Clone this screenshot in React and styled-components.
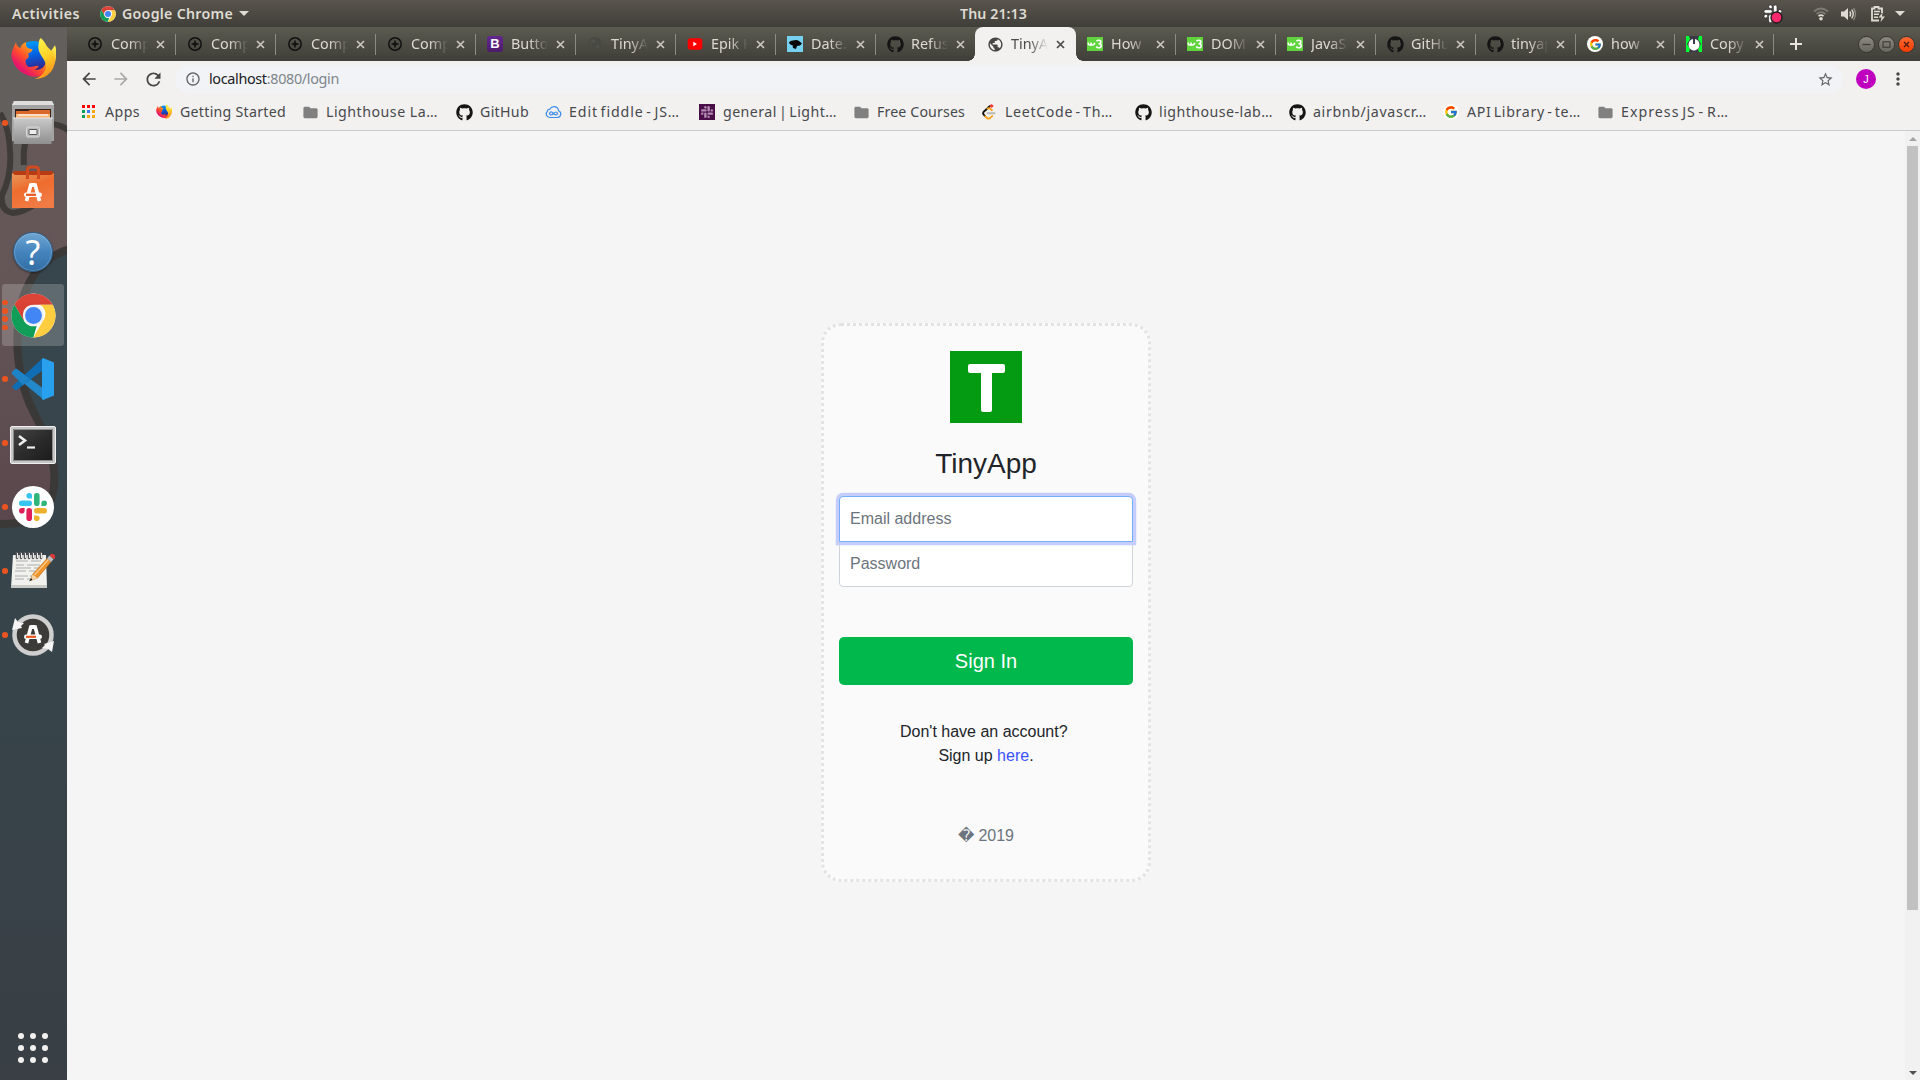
import React, { useLayoutEffect, useRef, useState } from "react";
import styled, { createGlobalStyle, css } from "styled-components";
import { FaGithub } from "react-icons/fa";
import { FcGoogle } from "react-icons/fc";
import {
  MdArrowBack,
  MdArrowForward,
  MdFolder,
  MdInfoOutline,
  MdMoreVert,
  MdPublic,
  MdRefresh,
  MdStarBorder,
} from "react-icons/md";

const UI_FONT = '"Noto Sans", "Open Sans", sans-serif';

const GlobalStyle = createGlobalStyle`
  *, *::before, *::after { box-sizing: border-box; }
  html, body { margin: 0; overflow: hidden; }
  svg { display: block; flex: none; }
`;

/* ---------- text fitted to a column ---------- */

const FitText = styled.span`
  display: inline-block;
  white-space: pre;
`;

function Fit({ width, children }) {
  const ref = useRef(null);
  const [spacing, setSpacing] = useState(0);
  useLayoutEffect(() => {
    const natural = ref.current.getBoundingClientRect().width;
    const count = ref.current.textContent.length;
    setSpacing((width - natural) / count);
  }, [width]);
  return (
    <FitText ref={ref} style={{ letterSpacing: spacing }}>
      {children}
    </FitText>
  );
}

/* ---------- frame ---------- */

const Desktop = styled.div`
  display: flex;
  flex-direction: column;
  width: 1920px;
  height: 1080px;
  overflow: hidden;
  font-family: ${UI_FONT};
  background: #37444a;
`;

const TopBar = styled.header`
  display: grid;
  grid-template-columns: 960px 1fr auto;
  align-items: center;
  height: 27px;
  flex: none;
  background: linear-gradient(#59554d, #403e39);
  color: #dfdbd2;
  font-size: 14.2px;
  font-weight: 600;
  line-height: 27px;
`;

const TopLeft = styled.div`
  display: flex;
  align-items: center;
  padding-left: 12px;
`;

const AppMenu = styled.div`
  display: flex;
  align-items: center;
  gap: 6px;
  margin-left: 20px;
`;

const Caret = styled.i`
  width: 0;
  height: 0;
  border: 5px solid transparent;
  border-top-color: #dfdbd2;
  border-bottom: 0;
`;

const Tray = styled.div`
  display: flex;
  align-items: center;
  padding-right: 15px;
`;

const TrayIcon = styled.span`
  display: flex;
  margin-right: ${(p) => p.$after}px;
`;

const Body = styled.div`
  display: flex;
  flex: 1;
  min-height: 0;
`;

/* ---------- dock ---------- */

const DockBar = styled.nav`
  position: relative;
  display: flex;
  flex-direction: column;
  width: 67px;
  flex: none;
  overflow: hidden;
`;

const Wallpaper = styled.svg`
  position: absolute;
  inset: 0;
`;

const DockItem = styled.div`
  position: relative;
  display: flex;
  align-items: center;
  justify-content: center;
  height: 64px;
  padding-right: 1px;
  flex: none;
`;

const DockTile = styled.div`
  display: flex;
  align-items: center;
  justify-content: center;
  width: 62px;
  height: 62px;
  padding-top: ${(p) => Math.max(0, p.$drop || 0) * 2}px;
  padding-bottom: ${(p) => Math.max(0, -(p.$drop || 0)) * 2}px;
  border-radius: 3px;
  background: ${(p) => (p.$active ? "rgba(255,255,255,0.2)" : "transparent")};
`;

const Dots = styled.div`
  position: absolute;
  left: 2px;
  top: 0;
  height: 64px;
  display: flex;
  flex-direction: column;
  justify-content: center;
  gap: 2.8px;
`;

const Dot = styled.i`
  width: 5.6px;
  height: 5.6px;
  border-radius: 50%;
  background: #e95420;
`;

const AppGrid = styled.div`
  position: relative;
  display: grid;
  grid-template-columns: repeat(3, 6px);
  gap: 6px;
  margin: auto 0 17px 18px;
`;

const GridDot = styled.i`
  height: 6px;
  border-radius: 50%;
  background: #f2f1f0;
`;

/* ---------- browser ---------- */

const Browser = styled.div`
  display: flex;
  flex-direction: column;
  flex: 1;
  min-width: 0;
  background: #f2f1f0;
`;

const TabStrip = styled.div`
  display: flex;
  height: 34px;
  flex: none;
  padding-left: 8px;
  background: linear-gradient(#5b5b51, #3f3e38);
`;

const activeTab = css`
  margin-right: -1px;
  background: #f2f1f0;
  border-radius: 8px 8px 0 0;
  color: #4b4b4b;
  z-index: 1;
  &::before,
  &::after {
    content: "";
    position: absolute;
    bottom: 0;
    width: 7px;
    height: 7px;
  }
  &::before {
    left: -7px;
    background: radial-gradient(circle at 0 0, transparent 6.5px, #f2f1f0 7px);
  }
  &::after {
    right: -7px;
    background: radial-gradient(circle at 100% 0, transparent 6.5px, #f2f1f0 7px);
  }
`;

const TabBox = styled.div`
  position: relative;
  display: flex;
  align-items: center;
  width: ${(p) => p.$width}px;
  flex: none;
  padding-left: 12px;
  color: #dcd9cf;
  ${(p) => p.$active && activeTab}
`;

const TabTitle = styled.span`
  width: 37px;
  margin: 0 7.5px 0 8px;
  overflow: hidden;
  white-space: pre;
  font-size: 14.4px;
  line-height: 20px;
  mask-image: linear-gradient(90deg, #000 50%, transparent 100%);
`;

const Divider = styled.i`
  width: 1px;
  height: 21px;
  margin: 0 -1px 0 auto;
  background: ${(p) => (p.$hidden ? "transparent" : "#8b8a83")};
`;

const NewTab = styled.button`
  display: flex;
  align-items: center;
  justify-content: center;
  width: 46px;
  border: 0;
  padding: 0;
  background: none;
`;

const WindowButtons = styled.div`
  display: flex;
  align-items: center;
  gap: 3px;
  margin-left: auto;
  padding-right: 5px;
`;

const WindowButton = styled.span`
  display: flex;
  align-items: center;
  justify-content: center;
  width: 17px;
  height: 17px;
  border: 1px solid #373630;
  border-radius: 50%;
  background: ${(p) =>
    p.$close ? "linear-gradient(#fb6a35, #f23c00)" : "linear-gradient(#8b8980, #686760)"};
`;

const Toolbar = styled.div`
  display: flex;
  align-items: center;
  height: 36px;
  flex: none;
  padding: 0 0 0 12px;
`;

const NavIcon = styled.span`
  display: flex;
  justify-content: center;
  width: 20px;
  flex: none;
  margin-right: 12px;
  color: ${(p) => (p.$dim ? "#aaa9a8" : "#464646")};
`;

const Omnibox = styled.div`
  display: flex;
  align-items: center;
  width: 1668px;
  flex: none;
  height: 28px;
  padding: 0 9px 0 10px;
  border-radius: 14px;
  background: #f1f3f6;
  color: #5f6368;
`;

const Url = styled.span`
  flex: 1;
  margin-left: 8px;
  font-size: 14.4px;
  line-height: 20px;
  color: #80868b;
`;

const Host = styled.span`
  color: #202124;
`;

const Avatar = styled.span`
  display: flex;
  align-items: center;
  justify-content: center;
  width: 20px;
  height: 20px;
  flex: none;
  margin: 0 12px 0 13px;
  border-radius: 50%;
  background: #bf00be;
  color: #fff;
  font: 11px "Liberation Sans", sans-serif;
`;

const MenuIcon = styled.span`
  display: flex;
  width: 20px;
  color: #464646;
`;

const Bookmarks = styled.div`
  display: flex;
  align-items: center;
  height: 34px;
  flex: none;
  padding: 0 0 3px 14px;
  border-bottom: 1px solid #cbcbcb;
`;

const Bookmark = styled.div`
  display: flex;
  align-items: center;
  gap: 8px;
  width: ${(p) => p.$width}px;
  flex: none;
  color: #47494c;
  font-size: 14.2px;
  line-height: 20px;
  word-spacing: ${(p) => (p.$tight ? -2 : 0)}px;
`;

const IconSlot = styled.span`
  display: flex;
  align-items: center;
  justify-content: center;
  width: 16px;
  height: 16px;
  flex: none;
`;

const Folder = styled(MdFolder)`
  color: #808080;
`;

const WhiteDisc = styled.span`
  display: flex;
  align-items: center;
  justify-content: center;
  width: 16px;
  height: 16px;
  border-radius: 50%;
  background: #fff;
`;

/* ---------- page ---------- */

const Viewport = styled.div`
  display: flex;
  flex: 1;
  min-height: 0;
`;

const Page = styled.main`
  display: flex;
  flex: 1;
  align-items: flex-start;
  justify-content: center;
  padding-top: 192px;
  background: #f5f5f5;
  font-family: "Liberation Sans", Arial, sans-serif;
  font-size: 16px;
  line-height: 24px;
  color: #212529;
`;

const Card = styled.form`
  display: flex;
  flex-direction: column;
  align-items: center;
  width: 330px;
  height: 559px;
  padding: 25px 15px 0;
  border: 3px dotted #e3e3e3;
  border-radius: 20px;
  background: #fafafa;
`;

const Title = styled.h1`
  margin: 24px 0 15px;
  font-size: 28px;
  font-weight: 400;
  line-height: 34px;
`;

const Field = styled.input`
  width: 294px;
  height: 46px;
  flex: none;
  padding: 0 10px;
  border: 1px solid #ced4da;
  border-radius: 0 0 4px 4px;
  outline: 0;
  background: #fff;
  font: inherit;
  &::placeholder {
    color: #6c757d;
    opacity: 1;
  }
  ${(p) =>
    p.$focused &&
    css`
      position: relative;
      margin-bottom: -1px;
      border-color: #75aefb;
      border-radius: 4px 4px 0 0;
      box-shadow: 0 0 0 3.2px #c5cdfc;
    `}
`;

const Submit = styled.button`
  width: 294px;
  height: 48px;
  flex: none;
  margin: 50px 0 35px;
  border: 0;
  border-radius: 5px;
  background: #00b84c;
  color: #fff;
  font: inherit;
  font-size: 20px;
`;

const Hint = styled.p`
  margin: 0;
  text-align: center;
  white-space: pre;
`;

const Link = styled.a`
  color: #3b52fb;
  text-decoration: none;
`;

const Copyright = styled.p`
  display: flex;
  gap: 4px;
  margin: 56px 0 0;
  color: #6c757d;
`;

const Replacement = styled.span`
  font-family: "DejaVu Sans", sans-serif;
`;

const Scrollbar = styled.div`
  display: flex;
  flex-direction: column;
  align-items: center;
  justify-content: space-between;
  width: 15px;
  padding: 6px 0 5px;
  background: #f1f1f1;
`;

const Thumb = styled.i`
  width: 11px;
  height: 764px;
  margin: 5px 0 auto;
  background: #c1c1c1;
`;

const Arrow = styled.i`
  width: 0;
  height: 0;
  border: 4px solid transparent;
  ${(p) =>
    p.$up
      ? "border-top: 0; border-bottom-color: #a3a3a3;"
      : "border-bottom: 0; border-top-color: #505050;"}
`;

/* ---------- drawings ---------- */

const ChromeLogo = ({ size }) => (
  <svg width={size} height={size} viewBox="0 0 48 48">
    <circle cx="24" cy="24" r="23.5" fill="#fff" />
    <path d="M3.6 12.3A23.5 23.5 0 0 1 44.4 12.5H24a11.6 11.6 0 0 0-10.4 6.4L13.9 30Z" fill="#db4437" />
    <path d="M3.6 12.3 14 30a11.6 11.6 0 0 0 13.5 5L23.8 47.5A23.5 23.5 0 0 1 3.6 12.3Z" fill="#0f9d58" />
    <path d="M44.4 12.5A23.5 23.5 0 0 1 23.8 47.5L34 29.8A11.6 11.6 0 0 0 31 12.5Z" fill="#ffcd40" />
    <path d="M3.6 12.3 14 30l3-12 7-5.5h20.4l-3.4-4.3Z" fill="#c53929" opacity=".12" />
    <circle cx="24" cy="24" r="11.3" fill="#f1f1f1" />
    <circle cx="24" cy="24" r="9" fill="#4285f4" />
  </svg>
);

const FirefoxLogo = ({ size, id }) => (
  <svg width={size} height={size} viewBox="0 0 44 44">
    <defs>
      <linearGradient id={id + "b"} x1="0.9" y1="0.1" x2="0.1" y2="0.8">
        <stop offset="0" stopColor="#fff04a" />
        <stop offset=".35" stopColor="#ffa51b" />
        <stop offset=".65" stopColor="#ff4b2e" />
        <stop offset=".9" stopColor="#e5156b" />
      </linearGradient>
      <linearGradient id={id + "g"} x1="0" y1="0" x2="0.2" y2="1">
        <stop offset="0" stopColor="#00a8f8" />
        <stop offset=".5" stopColor="#0460e0" />
        <stop offset="1" stopColor="#3b1d80" />
      </linearGradient>
      <linearGradient id={id + "y"} x1="0.2" y1="0" x2="0.5" y2="1">
        <stop offset="0" stopColor="#fff44f" />
        <stop offset=".5" stopColor="#ffd42a" />
        <stop offset="1" stopColor="#ff8e1a" />
      </linearGradient>
    </defs>
    <circle cx="22" cy="20" r="16" fill={`url(#${id}g)`} />
    <path
      d="M5 5c0 3 1 4 4 6 1-3 3-5 6-6-1 3 0 5 2 6l4 1c0 2-2 3-4 4 0 3 1 4-1 5-3 1-2 6 1 8 3 1 6-1 9-1 2 0 0 3-3 4 6 1 12-3 11-11l9-13c3 8 1 18-4 24-6 7-17 9-26 4C2 30-2 18 2 12 3 9 4 7 5 5Z"
      fill={`url(#${id}b)`}
    />
    <path d="M29 1c5 4 5 8 9 11 7 7 6 18-1 24-4 4-9 5-14 5 8-3 12-8 11-14-1-7-9-11-7-20 0-3 1-5 2-6Z" fill={`url(#${id}y)`} />
  </svg>
);

const FilesLogo = () => (
  <svg width="42" height="44" viewBox="0 0 42 44">
    <defs>
      <linearGradient id="cab" x1="0" y1="0" x2="0" y2="1">
        <stop offset="0" stopColor="#c9c9c9" />
        <stop offset="1" stopColor="#8f8f8f" />
      </linearGradient>
    </defs>
    <path d="M2 1h38l2 4v36H0V5Z" fill="#a3a3a3" />
    <path d="M2 1h38l2 4H0Z" fill="#dedede" />
    <path d="M3 9h36v13H3Z" fill="#33231c" />
    <path d="M4 11h12l2-1h20v8H4Z" fill="#d9692a" />
    <path d="M4 14h34v6H4Z" fill="#f6b676" />
    <path d="M6 15h30" stroke="#fff" strokeWidth="1.2" />
    <path d="M1.500 18h38.500l-.5 26H2Z" fill="url(#cab)" />
    <path d="M1 18h40" stroke="#e8e8e8" />
    <rect x="14.500" y="27" width="13" height="10" rx="1.500" fill="#b9b9b9" stroke="#dadada" />
    <rect x="17" y="29.500" width="8" height="5" rx=".5" fill="#eee" stroke="#555" />
  </svg>
);

const LetterA = ({ color = "#fff" }) => (
  <g>
    <path d="M2.500 18 6.800 2h4.400L15.500 18" stroke={color} strokeWidth="3.600" fill="none" />
    <path d="M7 0h4v4H7Z" fill={color} />
    <rect x="0" y="9.500" width="18" height="4.500" rx="2.200" fill={color} />
    <path d="M2 11.800h10" stroke="#e95420" strokeWidth="2.200" />
  </g>
);

const SoftwareLogo = () => (
  <svg width="42" height="44" viewBox="0 0 42 44">
    <defs>
      <linearGradient id="bag" x1="0" y1="0" x2="0.4" y2="1">
        <stop offset="0" stopColor="#e8995e" />
        <stop offset=".5" stopColor="#ee6c2d" />
        <stop offset="1" stopColor="#f17b45" />
      </linearGradient>
    </defs>
    <path d="M2 6h38l2 3v5H0V9Z" fill="#b83c13" />
    <path d="M0 8 3 10h36l3-2v35H0Z" fill="url(#bag)" />
    <path d="M15.500 14V5q0-3 3-3h5q3 0 3 3v9" stroke="#cf4a1f" strokeWidth="3" fill="none" />
    <g transform="translate(12,18)">
      <LetterA />
    </g>
  </svg>
);

const HelpMark = styled.span`
  display: flex;
  align-items: center;
  justify-content: center;
  width: 40px;
  height: 40px;
  border: 1px solid #2d618f;
  border-radius: 50%;
  background: linear-gradient(#6fa5d3, #4484bd 50%, #326ea4);
  box-shadow: 0 1px 2px rgba(0, 0, 0, 0.4), inset 0 0 0 1px rgba(255, 255, 255, 0.2);
  color: #fff;
  font: 34px/40px "Noto Sans", sans-serif;
`;

const CodeLogo = () => (
  <svg width="42" height="42" viewBox="0 0 42 42">
    <path d="M0 14 4 10.500 32 31v11L0 15.500Z" fill="#2489ca" />
    <path d="M0 28.500 31 0v12L4 32.500 0 29Z" fill="#0f6db3" />
    <path d="M31 0 42 4.500v33L31 42l-1-1V1Z" fill="#29a0ee" />
    <path d="M0 14 4 10.500 18 21l-7 6-11-11Z" fill="#1d82c6" />
  </svg>
);

const TerminalLogo = () => (
  <svg width="46" height="38" viewBox="0 0 46 38">
    <defs>
      <linearGradient id="term" x1="0" y1="0" x2="1" y2="1">
        <stop offset="0" stopColor="#444" />
        <stop offset=".5" stopColor="#2c2c2c" />
        <stop offset="1" stopColor="#1b1b1b" />
      </linearGradient>
    </defs>
    <rect x=".5" y=".5" width="45" height="37" rx="1.500" fill="#c6c6c6" stroke="#efefef" />
    <rect x="3.500" y="3.500" width="39" height="31" fill="url(#term)" stroke="#8b8b8b" />
    <path d="m9 10 6 4.500-6 4.500" stroke="#eee" strokeWidth="2.600" fill="none" />
    <path d="M17 21.500h8" stroke="#eee" strokeWidth="2.200" />
  </svg>
);

const SlackShape = ({ colors }) => (
  <g>
    <g fill={colors[0]}>
      <rect x="0" y="7.400" width="13" height="5.600" rx="2.800" />
      <path d="M13 5.600h-2.800A2.800 2.800 0 1 1 13 2.800Z" />
    </g>
    <g fill={colors[1]}>
      <rect x="15" y="0" width="5.600" height="13" rx="2.800" />
      <path d="M22.400 13v-2.800a2.800 2.800 0 1 1 2.800 2.800Z" />
    </g>
    <g fill={colors[2]}>
      <rect x="15" y="15" width="13" height="5.600" rx="2.800" />
      <path d="M15 22.400h2.800a2.800 2.800 0 1 1-2.800 2.800Z" />
    </g>
    <g fill={colors[3]}>
      <rect x="7.400" y="15" width="5.600" height="13" rx="2.800" />
      <path d="M5.600 15v2.800A2.800 2.800 0 1 1 2.800 15Z" />
    </g>
  </g>
);

const SlackLogo = () => (
  <svg width="42" height="42" viewBox="0 0 42 42">
    <circle cx="21" cy="21" r="21" fill="#fff" />
    <g transform="translate(7,7)">
      <SlackShape colors={["#36c5f0", "#2eb67d", "#ecb22e", "#e01e5a"]} />
    </g>
  </svg>
);

const NotesLogo = () => (
  <svg width="46" height="38" viewBox="0 0 46 38">
    <path d="M3 4h33l1 33H1Z" fill="#f1f1ee" />
    <path d="M1 34h36v3H1Z" fill="#c9c9c5" />
    <path
      d="M6 10h12m3 0h10M6 14h8m3 0h13M6 17h15m3 0h5M5 20h11m3 0h6M5 25h13m2 0h3M5 28h9m3 0h4"
      stroke="#a5a5a2"
      strokeWidth=".9"
    />
    <path d="M7 2v5M11 2v5M15 2v5M19 2v5M23 2v5M27 2v5M31 2v5" stroke="#5b5b5b" strokeWidth="2.600" strokeLinecap="round" />
    <path d="M7.500 2v5M11.500 2v5M15.500 2v5M19.500 2v5M23.500 2v5M27.500 2v5M31.500 2v5" stroke="#e9e9e9" strokeWidth="1" />
    <path d="m22.500 23.500 14.500-16 4 3.500-13.500 16-7 2.500Z" fill="#f0932b" stroke="#b5651a" strokeWidth=".6" />
    <path d="m24.500 24 14-15.500" stroke="#ffc985" strokeWidth="1.300" />
    <path d="m22.500 23.500 5 3.500-7 3Z" fill="#f5d6a5" />
    <path d="m21 27 1.600 1.800L19 30.500Z" fill="#222" />
    <path d="m37 7.500 2.500-3 4 3.700-2.500 3Z" fill="#bdbdbd" />
    <path d="m39.500 4.500q2-3 4.500-1t0 4.700Z" fill="#dc3a3a" />
  </svg>
);

const UpdaterLogo = () => (
  <svg width="44" height="44" viewBox="0 0 44 44">
    <circle cx="22" cy="22" r="18.500" fill="#3d3b38" stroke="#cfcfcf" strokeWidth="4.500" />
    <path d="M1 17 4 5l3 4 6 1-3 3 1 2Z" fill="#f4f4f4" />
    <path d="m43 28-2 11-4-3-6-1 3-3-1-1Z" fill="#f4f4f4" />
    <g transform="translate(13,12)">
      <LetterA />
    </g>
  </svg>
);

const DockWallpaper = () => (
  <Wallpaper width="67" height="1053" viewBox="0 27 67 1053">
    <defs>
      <linearGradient id="sky" x1="0" y1="0" x2="0" y2="1">
        <stop offset="0" stopColor="#37464e" />
        <stop offset=".65" stopColor="#37444a" />
        <stop offset="1" stopColor="#393f44" />
      </linearGradient>
      <linearGradient id="rock" x1="0" y1="0" x2="0" y2="1">
        <stop offset="0" stopColor="#675a59" />
        <stop offset=".5" stopColor="#645657" />
        <stop offset="1" stopColor="#5a474d" />
      </linearGradient>
    </defs>
    <rect y="27" width="67" height="1053" fill="url(#sky)" />
    <path d="M0 27H67V249C40 256 28 277 20 300C10 345 17 385 33 415C54 450 54 490 47 507C38 524 20 525 0 525Z" fill="url(#rock)" />
    <path d="M0 27H67V128Q57 123 45 125Q24 130 25 165Q26 205 13 212Q2 211 1 199Q13 175 11 150Q9 127 0 113Z" fill="#625f5d" />
    <path d="M0 113Q9 127 10 150Q12 175 2 195Q0 211 13 213Q27 212 46 196" stroke="#3e3b38" strokeWidth="6" fill="none" />
    <path d="M24 165Q21 128 45 125Q58 122 69 131" stroke="#3e3b38" strokeWidth="6" fill="none" />
    <path d="M70 249C42 257 30 277 22 300C12 345 19 385 35 415C58 455 57 485 50 503C41 522 20 524 0 524" stroke="#3b3937" strokeWidth="8" fill="none" />
  </Wallpaper>
);

const PlusTarget = () => (
  <svg width="16" height="16" viewBox="0 0 16 16" stroke="#111" fill="none">
    <circle cx="8" cy="8" r="6.200" strokeWidth="1.500" />
    <path d="M8 4.500v7M4.500 8h7" strokeWidth="1.500" />
    <circle cx="8" cy="8" r="1.800" fill="#111" stroke="none" />
  </svg>
);

const BootstrapTile = styled.span`
  display: flex;
  align-items: center;
  justify-content: center;
  width: 16px;
  height: 16px;
  border-radius: 3px;
  background: linear-gradient(#64278f, #4c1b6c);
  color: #fff;
  font: bold 13px/16px "Liberation Sans", sans-serif;
`;

const FaintGlobe = () => (
  <svg width="16" height="16" viewBox="0 0 16 16">
    <circle cx="8" cy="8" r="7" fill="#494943" />
    <path d="M5 4q3-2 4 0t-3 3-2 3-1-4Zm5 5q3-1 2 2t-3 1Z" fill="#51514a" />
  </svg>
);

const PlayTile = () => (
  <svg width="16" height="16" viewBox="0 0 16 16">
    <rect x=".7" y="2.300" width="14.600" height="11.400" rx="2.600" fill="#f00" />
    <path d="M6.300 5.800v4.400L10 8Z" fill="#fff" />
  </svg>
);

const DinoTile = () => (
  <svg width="16" height="16" viewBox="0 0 16 16">
    <path d="M0 0h16v16H0Z" fill="#76d0f0" />
    <path d="M2 7q0-2 4-2.500 4-1 6 .5l3 2.500-2 2-3 .5-1 3-3-1-.5-3L4 9Z" fill="#080808" />
  </svg>
);

const SchoolsTile = () => (
  <svg width="16" height="16" viewBox="0 0 16 16">
    <path d="M0 1h16v14H0Z" fill="#5fd43c" />
    <path d="M1.200 6.500v.8q0 1.700 1.400 1.700t1.400-1.700v-.8.8Q4 9 5.500 9q1.200 0 2.500-2M9.500 5.300q.8-1 2.300-1 2 0 2 1.600T11.500 7.800q2.800 0 2.800 2t-2.500 2q-1.800 0-2.600-1.300" stroke="#fff" strokeWidth="1.600" fill="none" />
  </svg>
);

const CopyTile = () => (
  <svg width="16" height="16" viewBox="0 0 16 16">
    <path d="M0 0h16v16H0Z" fill="#0f3" />
    <path d="M3 0h10l-1 3 3 5-3 5 1 3H3l1-3-3-5 3-5Z" fill="#3c3747" />
    <path d="M7 3Q2.500 4 2.500 9 3 13 6 14q2 1 4 0 3-1 3.500-5 0-5-4.500-6v5H7Z" fill="#fff" />
  </svg>
);

const AppsIcon = () => (
  <svg width="16" height="16" viewBox="0 0 16 16">
    {["#f00", "#f00", "#f00", "#0a9d58", "#3b7df0", "#fba60a", "#0a9d58", "#fba60a", "#fba60a"].map((c, i) => (
      <rect key={i} x={1 + (i % 3) * 5} y={1 + Math.floor(i / 3) * 5} width="3" height="3" fill={c} />
    ))}
  </svg>
);

const FiddleIcon = () => (
  <svg width="17" height="16" viewBox="0 0 17 16" fill="none" stroke="#3b8de8" strokeWidth="1.200">
    <path d="M4.500 13.500a3.600 3.600 0 0 1-2-6.300Q2.500 5 4.700 5.300 6.500 2.500 9.500 2.700q3.700.5 4 4 2.500 1 2.300 3.500-.4 3-3.300 3.300Z" />
    <path d="M8.500 9.500q-3-3.400-4 0 1 3 4 0t4 0q-1 3-4 0Z" />
  </svg>
);

const SlackTile = () => (
  <svg width="16" height="16" viewBox="0 0 16 16">
    <path d="M0 0h16v16H0Z" fill="#4a0f49" />
    <g transform="translate(2,2) scale(.43)">
      <SlackShape colors={["#b48bb2", "#b48bb2", "#b48bb2", "#b48bb2"]} />
    </g>
  </svg>
);

const LeetIcon = () => (
  <svg width="16" height="16" viewBox="0 0 16 16" fill="none" strokeWidth="1.900" strokeLinecap="round">
    <path d="M6.500 9.300h7" stroke="#b8b8b8" />
    <path d="m9 2-6.500 6q-1 1.200 0 2.300l1.800 2" stroke="#111" />
    <path d="m4.300 12.300 1.700 1.800q1.500 1 3 0l2.200-2M6.500 4.500q1.800-.8 3 .4l1.400 1.300" stroke="#fba41d" />
    <circle cx="10.500" cy="2" r="1.300" fill="#ef3b3b" stroke="#ef3b3b" strokeWidth="1" />
  </svg>
);

const Close = ({ color }) => (
  <svg width="9" height="9" viewBox="0 0 9 9">
    <path d="m1 1 7 7M8 1 1 8" stroke={color} strokeWidth="1.700" />
  </svg>
);

const SlackTray = () => (
  <svg width="20" height="20" viewBox="0 0 20 20">
    <g transform="translate(1,1) scale(.63)" stroke="#111" strokeWidth=".8">
      <SlackShape colors={["#fff", "#fff", "#fff", "#fff"]} />
    </g>
    <circle cx="13.500" cy="13.500" r="5.500" fill="#f9286f" stroke="#1b1b1b" strokeWidth="1.300" />
  </svg>
);

const WifiIcon = () => (
  <svg width="16" height="14" viewBox="0 0 16 14" fill="none" strokeWidth="1.700">
    <path d="M1 4.500q7-6 14 0" stroke="#7d7a73" />
    <path d="M3.500 7q4.500-3.800 9 0" stroke="#7d7a73" />
    <path d="M5.500 9.200q2.500-2 5 0" stroke="#dfdbd2" />
    <circle cx="8" cy="11.800" r="1.800" fill="#dfdbd2" />
  </svg>
);

const VolumeIcon = () => (
  <svg width="16" height="14" viewBox="0 0 16 14" fill="none">
    <path d="M0 4.500h3L7 1v12L3 9.500H0Z" fill="#dfdbd2" />
    <path d="M8.800 4.500q1.700 2.500 0 5M10.700 2.700q3 4.300 0 8.600" stroke="#dfdbd2" strokeWidth="1.400" />
    <path d="M12.500 1q4 6 0 12" stroke="#8a877f" strokeWidth="1.400" />
  </svg>
);

const BatteryIcon = () => (
  <svg width="14" height="16" viewBox="0 0 14 16" fill="none">
    <path d="M8 14.500H1V2.500h2.500V1h4v1.500H11V7" stroke="#dfdbd2" strokeWidth="1.800" />
    <path d="M3 5.500h6M3 8.300h5M3 11.200h4" stroke="#dfdbd2" strokeWidth="1.500" />
    <path d="M11.500 6.500 7.500 11.500h3l-1 4.500 4.500-5.500h-3Z" fill="#dfdbd2" />
  </svg>
);

const LogoTile = () => (
  <svg width="72" height="72" viewBox="0 0 72 72">
    <path d="M0 0h72v72H0Z" fill="#049b12" />
    <rect x="18" y="13" width="37" height="9" rx="2" fill="#fff" />
    <rect x="31" y="15" width="11" height="46" rx="2" fill="#fff" />
    <path d="M49 69h21" stroke="#2d850c" strokeWidth="1" strokeDasharray="2 1" />
  </svg>
);

/* ---------- data ---------- */

const github = <FaGithub size={17} color="#151515" />;

const tabs = [
  { icon: <PlusTarget />, title: "Comp" },
  { icon: <PlusTarget />, title: "Comp" },
  { icon: <PlusTarget />, title: "Comp" },
  { icon: <PlusTarget />, title: "Comp" },
  { icon: <BootstrapTile>B</BootstrapTile>, title: "Butto" },
  { icon: <FaintGlobe />, title: "TinyA" },
  { icon: <PlayTile />, title: "Epik H" },
  { icon: <DinoTile />, title: "Date." },
  { icon: github, title: "Refus", bare: true },
  { icon: <MdPublic size={17} color="#464646" />, title: "TinyA", active: true, bare: true, width: 101 },
  { icon: <SchoolsTile />, title: "How" },
  { icon: <SchoolsTile />, title: "DOM" },
  { icon: <SchoolsTile />, title: "JavaS" },
  { icon: github, title: "GitHu" },
  { icon: github, title: "tinyap" },
  { icon: <WhiteDisc><FcGoogle size={13} /></WhiteDisc>, title: "how", width: 99 },
  { icon: <CopyTile />, title: "Copy", width: 99 },
];

const bookmarks = [
  { icon: <AppsIcon />, label: "Apps", text: 35, width: 75 },
  { icon: <FirefoxLogo size={16} id="fs" />, label: "Getting Started", text: 106, width: 146 },
  { icon: <Folder size={17} />, label: "Lighthouse La…", text: 112, width: 154 },
  { icon: github, label: "GitHub", text: 49, width: 89 },
  { icon: <FiddleIcon />, label: "Edit fiddle - JS…", text: 111, width: 154, tight: true },
  { icon: <SlackTile />, label: "general | Light…", text: 114, width: 154, tight: true },
  { icon: <Folder size={17} />, label: "Free Courses", text: 88, width: 128 },
  { icon: <LeetIcon />, label: "LeetCode - Th…", text: 108, width: 154, tight: true },
  { icon: github, label: "lighthouse-lab…", text: 114, width: 154 },
  { icon: github, label: "airbnb/javascr…", text: 114, width: 154 },
  { icon: <WhiteDisc><FcGoogle size={14} /></WhiteDisc>, label: "API Library - te…", text: 114, width: 154, tight: true },
  { icon: <Folder size={17} />, label: "Express JS - R…", text: 108, width: 154, tight: true },
];

const dock = [
  { icon: <FirefoxLogo size={45} id="fl" />, dots: 0 },
  { icon: <FilesLogo />, dots: 1, drop: -1 },
  { icon: <SoftwareLogo />, dots: 0 },
  { icon: <HelpMark>?</HelpMark>, dots: 0, drop: 1 },
  { icon: <ChromeLogo size={45} />, dots: 4, active: true },
  { icon: <CodeLogo />, dots: 1 },
  { icon: <TerminalLogo />, dots: 1, drop: 2 },
  { icon: <SlackLogo />, dots: 1 },
  { icon: <NotesLogo />, dots: 1, drop: -1 },
  { icon: <UpdaterLogo />, dots: 1 },
];

export default function App() {
  return (
    <Desktop>
      <GlobalStyle />
      <TopBar>
        <TopLeft>
          <Fit width={68}>Activities</Fit>
          <AppMenu>
            <ChromeLogo size={16} />
            <Fit width={111}>Google Chrome</Fit>
            <Caret />
          </AppMenu>
        </TopLeft>
        <div>
          <Fit width={67}>Thu 21:13</Fit>
        </div>
        <Tray>
          <TrayIcon $after={30}><SlackTray /></TrayIcon>
          <TrayIcon $after={12}><WifiIcon /></TrayIcon>
          <TrayIcon $after={14}><VolumeIcon /></TrayIcon>
          <TrayIcon $after={10}><BatteryIcon /></TrayIcon>
          <Caret />
        </Tray>
      </TopBar>

      <Body>
        <DockBar>
          <DockWallpaper />
          {dock.map((item, i) => (
            <DockItem key={i}>
              <DockTile $active={item.active} $drop={item.drop}>{item.icon}</DockTile>
              <Dots>
                {Array.from({ length: item.dots }, (_, d) => (
                  <Dot key={d} />
                ))}
              </Dots>
            </DockItem>
          ))}
          <AppGrid>
            {Array.from({ length: 9 }, (_, i) => (
              <GridDot key={i} />
            ))}
          </AppGrid>
        </DockBar>

        <Browser>
          <TabStrip>
            {tabs.map((tab, i) => (
              <TabBox key={i} $width={tab.width || 100} $active={tab.active}>
                <IconSlot>{tab.icon}</IconSlot>
                <TabTitle>{tab.title}</TabTitle>
                <Close color={tab.active ? "#4b4b4b" : "#c9c7be"} />
                <Divider $hidden={tab.bare} />
              </TabBox>
            ))}
            <NewTab>
              <svg width="12" height="12" viewBox="0 0 12 12">
                <path d="M6 0v12M0 6h12" stroke="#e8e6df" strokeWidth="2" />
              </svg>
            </NewTab>
            <WindowButtons>
              <WindowButton>
                <svg width="9" height="9" viewBox="0 0 9 9"><path d="M.5 4.500h8" stroke="#3a3934" strokeWidth="1.200" /></svg>
              </WindowButton>
              <WindowButton>
                <svg width="9" height="9" viewBox="0 0 9 9"><rect x="1" y="1.800" width="7" height="5.400" stroke="#3a3934" strokeWidth="1.100" fill="none" /></svg>
              </WindowButton>
              <WindowButton $close>
                <svg width="9" height="9" viewBox="0 0 9 9"><path d="m2 2 5 5m0-5L2 7" stroke="#4a1c0c" strokeWidth="1.300" /></svg>
              </WindowButton>
            </WindowButtons>
          </TabStrip>

          <Toolbar>
            <NavIcon><MdArrowBack size={20} /></NavIcon>
            <NavIcon $dim><MdArrowForward size={20} /></NavIcon>
            <NavIcon><MdRefresh size={21} /></NavIcon>
            <Omnibox>
              <MdInfoOutline size={16} />
              <Url>
                <Fit width={130}><Host>localhost</Host>:8080/login</Fit>
              </Url>
              <MdStarBorder size={17} />
            </Omnibox>
            <Avatar>J</Avatar>
            <MenuIcon><MdMoreVert size={20} /></MenuIcon>
          </Toolbar>

          <Bookmarks>
            {bookmarks.map((b, i) => (
              <Bookmark key={i} $width={b.width} $tight={b.tight}>
                <IconSlot>{b.icon}</IconSlot>
                <Fit width={b.text}>{b.label}</Fit>
              </Bookmark>
            ))}
          </Bookmarks>

          <Viewport>
            <Page>
              <Card onSubmit={(e) => e.preventDefault()}>
                <LogoTile />
                <Title>TinyApp</Title>
                <Field type="email" placeholder="Email address" $focused />
                <Field type="password" placeholder="Password" />
                <Submit type="submit">Sign In</Submit>
                <Hint>{"Don't have an account?\u00a0"}</Hint>
                <Hint>
                  {"Sign up "}
                  <Link href="#">here</Link>.
                </Hint>
                <Copyright>
                  <Replacement>{"\ufffd"}</Replacement>
                  <span>2019</span>
                </Copyright>
              </Card>
            </Page>
            <Scrollbar>
              <Arrow $up />
              <Thumb />
              <Arrow />
            </Scrollbar>
          </Viewport>
        </Browser>
      </Body>
    </Desktop>
  );
}
